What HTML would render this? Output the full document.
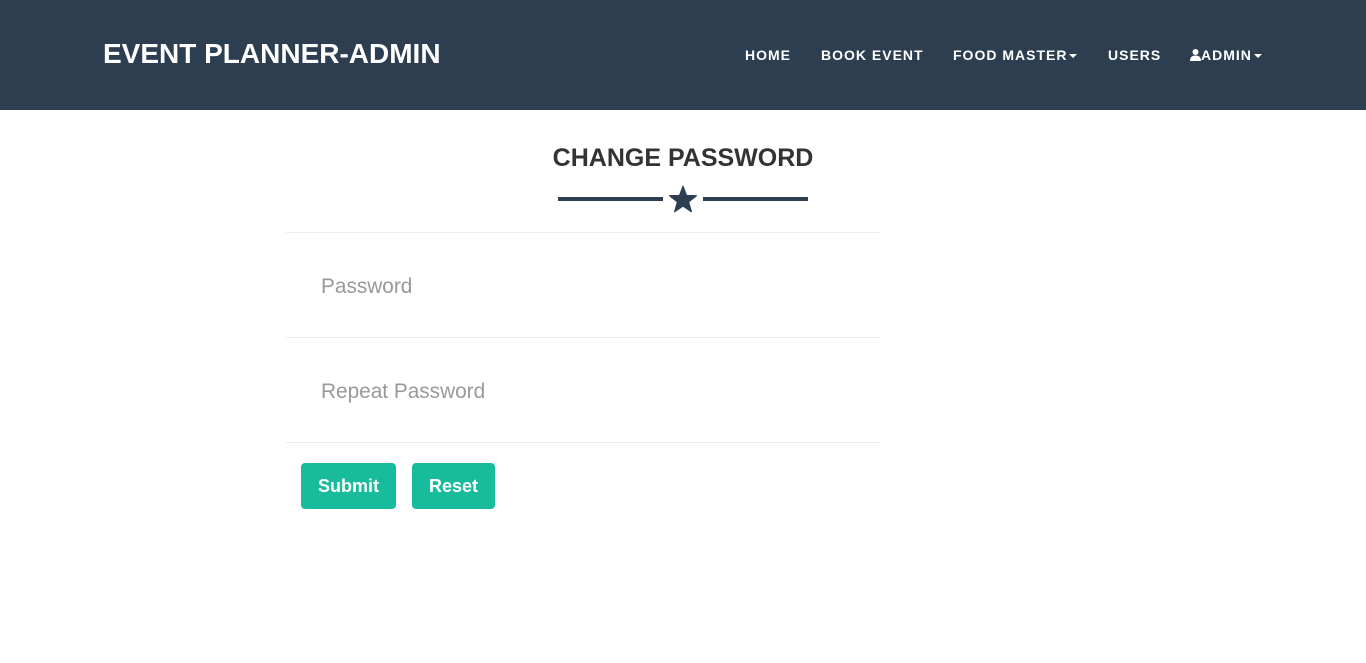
<!DOCTYPE html>
<html><head><meta charset="utf-8"><style>
*{margin:0;padding:0;box-sizing:border-box}
body{width:1366px;height:663px;background:#fff;font-family:"Liberation Sans",Arial,sans-serif;overflow:hidden;position:relative}
.nav{position:absolute;left:0;top:0;width:1366px;height:110px;background:#2c3e50}
.brand{position:absolute;left:103px;top:38px;color:#fff;font-weight:bold;font-size:28px;line-height:32px}
.links a{position:absolute;top:47px;color:#fff;font-weight:bold;font-size:14px;letter-spacing:1px;line-height:16px;text-decoration:none}
.caret{display:inline-block;width:0;height:0;border-left:4px solid transparent;border-right:4px solid transparent;border-top:4px solid #fff;vertical-align:middle;margin-left:2px}
h2{position:absolute;left:0;width:1366px;top:144px;text-align:center;font-size:25px;font-weight:bold;color:#333;line-height:28px}
.ln{position:absolute;top:197px;height:4px;background:#2c3e50;width:105px}
.hr{position:absolute;left:286px;width:595px;height:1px;background:#eee}
.ph{position:absolute;left:321px;font-size:20.8px;color:#999;line-height:24px}
.btn{position:absolute;top:463px;height:46px;background:#18bc9c;color:#fff;font-weight:bold;font-size:18px;line-height:46px;text-align:center;border-radius:4px}
</style></head><body>
<div class="nav">
<div class="brand">EVENT PLANNER-ADMIN</div>
<div class="links">
<a style="left:745px">HOME</a>
<a style="left:821px">BOOK EVENT</a>
<a style="left:953px">FOOD MASTER<span class="caret"></span></a>
<a style="left:1108px">USERS</a>
<a style="left:1190px"><svg width="11" height="12" viewBox="0 0 11 12" style="vertical-align:-1px"><circle cx="5.5" cy="3" r="3" fill="#fff"/><path d="M0 12 Q0 6.5 5.5 6.5 Q11 6.5 11 12Z" fill="#fff"/></svg>ADMIN<span class="caret"></span></a>
</div>
</div>
<h2>CHANGE PASSWORD</h2>
<div class="ln" style="left:558px"></div>
<div class="ln" style="left:703px"></div>
<svg style="position:absolute;left:669px;top:185px" width="28" height="28" viewBox="0 0 24 24"><path d="M12 1 L15 9 L23.5 9.2 L16.8 14.5 L19.2 23 L12 18 L4.8 23 L7.2 14.5 L0.5 9.2 L9 9Z" fill="#2c3e50" stroke="#2c3e50" stroke-width="1" stroke-linejoin="round"/></svg>
<div class="hr" style="top:232px"></div>
<div class="ph" style="top:275px">Password</div>
<div class="hr" style="top:337px"></div>
<div class="ph" style="top:380px">Repeat Password</div>
<div class="hr" style="top:442px"></div>
<div class="btn" style="left:301px;width:95px">Submit</div>
<div class="btn" style="left:412px;width:83px">Reset</div>
</body></html>
